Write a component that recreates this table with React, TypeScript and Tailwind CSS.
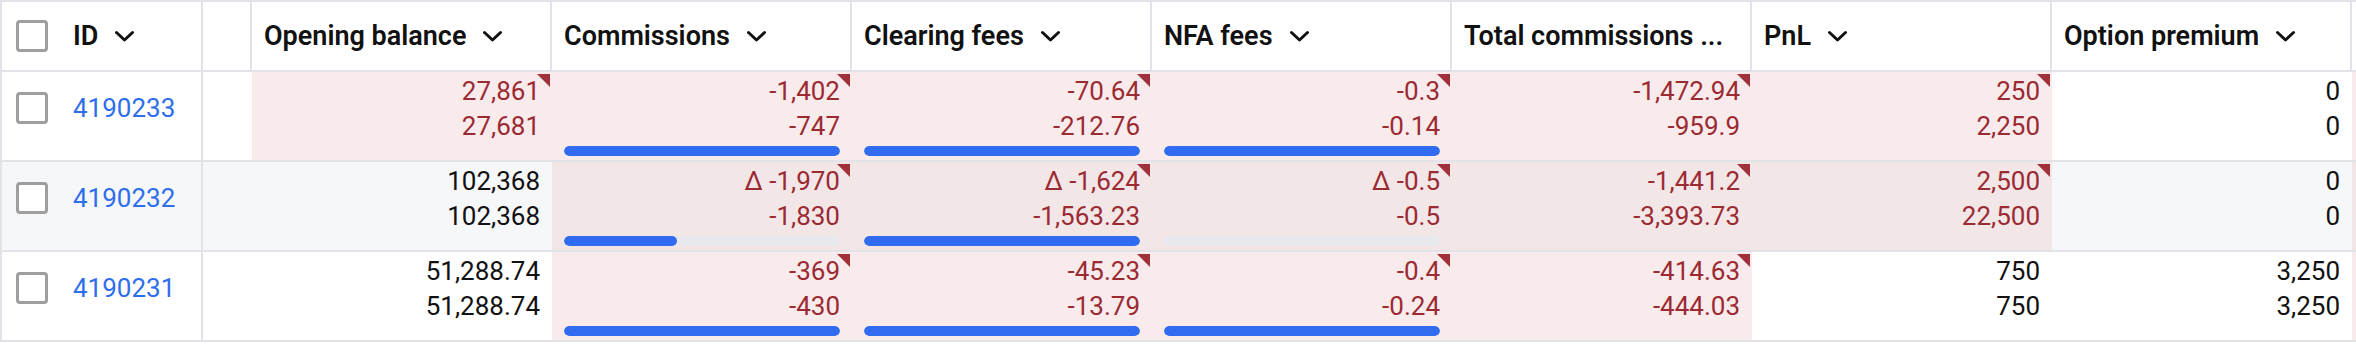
import React from 'react'

type Cell = {
  top: string
  bottom: string
  pink?: boolean
  flag?: boolean
  bar?: number
}

type Row = {
  id: string
  hover?: boolean
  cells: Cell[]
}

const columns = [
  { label: 'Opening balance', sort: true },
  { label: 'Commissions', sort: true },
  { label: 'Clearing fees', sort: true },
  { label: 'NFA fees', sort: true },
  { label: 'Total commissions ...', sort: false },
  { label: 'PnL', sort: true },
  { label: 'Option premium', sort: true },
]

const rows: Row[] = [
  {
    id: '4190233',
    cells: [
      { top: '27,861', bottom: '27,681', pink: true, flag: true },
      { top: '-1,402', bottom: '-747', pink: true, flag: true, bar: 100 },
      { top: '-70.64', bottom: '-212.76', pink: true, flag: true, bar: 100 },
      { top: '-0.3', bottom: '-0.14', pink: true, flag: true, bar: 100 },
      { top: '-1,472.94', bottom: '-959.9', pink: true, flag: true },
      { top: '250', bottom: '2,250', pink: true, flag: true },
      { top: '0', bottom: '0' },
    ],
  },
  {
    id: '4190232',
    hover: true,
    cells: [
      { top: '102,368', bottom: '102,368' },
      { top: 'Δ -1,970', bottom: '-1,830', pink: true, flag: true, bar: 41 },
      { top: 'Δ -1,624', bottom: '-1,563.23', pink: true, flag: true, bar: 100 },
      { top: 'Δ -0.5', bottom: '-0.5', pink: true, flag: true, bar: 0 },
      { top: '-1,441.2', bottom: '-3,393.73', pink: true, flag: true },
      { top: '2,500', bottom: '22,500', pink: true, flag: true },
      { top: '0', bottom: '0' },
    ],
  },
  {
    id: '4190231',
    cells: [
      { top: '51,288.74', bottom: '51,288.74' },
      { top: '-369', bottom: '-430', pink: true, flag: true, bar: 100 },
      { top: '-45.23', bottom: '-13.79', pink: true, flag: true, bar: 100 },
      { top: '-0.4', bottom: '-0.24', pink: true, flag: true, bar: 100 },
      { top: '-414.63', bottom: '-444.03', pink: true, flag: true },
      { top: '750', bottom: '750' },
      { top: '3,250', bottom: '3,250' },
    ],
  },
]

function Chevron() {
  return (
    <svg className="ml-[16px] h-[12px] w-[21px] shrink-0" viewBox="0 0 21 12" fill="none">
      <path d="M2.5 2.5 L10.5 10 L18.5 2.5" stroke="#111" strokeWidth="3" strokeLinecap="round" strokeLinejoin="round" />
    </svg>
  )
}

function Checkbox() {
  return <div className="h-[32px] w-[32px] shrink-0 rounded-[4px] border-[3px] border-[#9e9e9e] bg-white" />
}

function DataCell({ cell, hover }: { cell: Cell; hover?: boolean }) {
  const bg = cell.pink
    ? hover
      ? 'bg-[#f3e6e7]'
      : 'bg-[#f9eaeb]'
    : hover
      ? 'bg-[#f6f7f9]'
      : 'bg-white'
  const color = cell.pink ? 'text-[#9b2a33]' : 'text-[#111111]'
  return (
    <div className={`relative flex h-full w-[300px] shrink-0 flex-col px-3 pt-[2px] ${bg}`}>
      {cell.flag && (
        <div className="absolute right-[2px] top-[2px] h-0 w-0 border-l-[13px] border-t-[13px] border-l-transparent border-t-[#a0303a]" />
      )}
      <div className={`text-right leading-[35px] ${color}`}>{cell.top}</div>
      <div className={`text-right leading-[35px] ${color}`}>{cell.bottom}</div>
      {cell.bar !== undefined && (
        <div className="mt-[2px] h-[10px] w-full overflow-hidden rounded-full bg-[#e8e9ee]">
          <div className="h-full rounded-full bg-[#316cf0]" style={{ width: `${cell.bar}%` }} />
        </div>
      )}
    </div>
  )
}

export default function App() {
  return (
    <div
      className="w-[2356px] overflow-hidden bg-white text-[26px] text-[#111111]"
      style={{ fontFamily: 'Roboto, "Noto Sans", sans-serif' }}
    >
      <div className="w-[2652px] border-l-2 border-t-2 border-[#e1e3e8]">
        {/* header */}
        <div className="flex h-[70px] border-b-2 border-[#e1e3e8] bg-white text-[27px] font-semibold">
          <div className="flex w-[201px] shrink-0 items-center border-r-2 border-[#e1e3e8] pl-[14px]">
            <Checkbox />
            <span className="ml-[25px]">ID</span>
            <Chevron />
          </div>
          <div className="w-[49px] shrink-0 border-r-2 border-[#e1e3e8]" />
          {columns.map((col) => (
            <div
              key={col.label}
              className="flex w-[300px] shrink-0 items-center overflow-hidden border-r-2 border-[#e1e3e8] px-3"
            >
              <span className="overflow-hidden whitespace-nowrap">{col.label}</span>
              {col.sort && <Chevron />}
            </div>
          ))}
          <div className="w-[300px] shrink-0" />
        </div>

        {/* body */}
        {rows.map((row) => (
          <div
            key={row.id}
            className={`flex h-[90px] border-b-2 border-[#e1e3e8] ${row.hover ? 'bg-[#f6f7f9]' : 'bg-white'}`}
          >
            <div className="flex w-[201px] shrink-0 items-center border-r-2 border-[#e1e3e8] pb-[16px] pl-[14px]">
              <Checkbox />
              <a href="#" className="ml-[25px] text-[#2f6eeb]">
                {row.id}
              </a>
            </div>
            <div className="w-[49px] shrink-0" />
            {row.cells.map((cell, i) => (
              <DataCell key={i} cell={cell} hover={row.hover} />
            ))}
            <div className={`w-[300px] shrink-0 ${row.hover ? 'bg-[#f3e6e7]' : 'bg-[#f9eaeb]'}`} />
          </div>
        ))}
      </div>
    </div>
  )
}
